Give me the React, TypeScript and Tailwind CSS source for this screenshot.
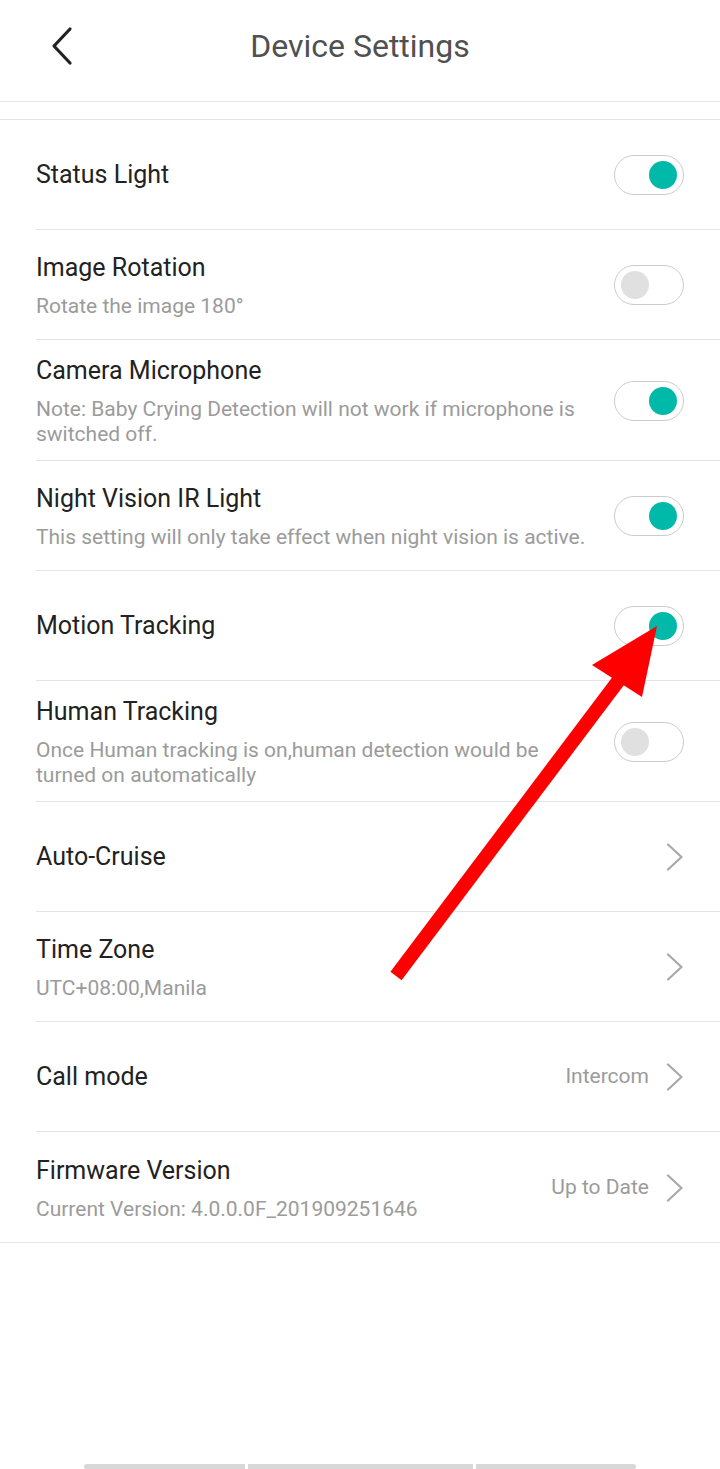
import React from 'react';

type Row = {
  title: string;
  sub?: string;
  toggle?: boolean;
  value?: string;
  chevron?: boolean;
};

const rows: Row[] = [
  { title: 'Status Light', toggle: true },
  { title: 'Image Rotation', sub: 'Rotate the image 180°', toggle: false },
  {
    title: 'Camera Microphone',
    sub: 'Note: Baby Crying Detection will not work if microphone is switched off.',
    toggle: true,
  },
  {
    title: 'Night Vision IR Light',
    sub: 'This setting will only take effect when night vision is active.',
    toggle: true,
  },
  { title: 'Motion Tracking', toggle: true },
  {
    title: 'Human Tracking',
    sub: 'Once Human tracking is on,human detection would be turned on automatically',
    toggle: false,
  },
  { title: 'Auto-Cruise', chevron: true },
  { title: 'Time Zone', sub: 'UTC+08:00,Manila', chevron: true },
  { title: 'Call mode', value: 'Intercom', chevron: true },
  {
    title: 'Firmware Version',
    sub: 'Current Version: 4.0.0.0F_201909251646',
    value: 'Up to Date',
    chevron: true,
  },
];

function Toggle({ on }: { on: boolean }) {
  return (
    <div
      className={`w-[70px] h-[40px] rounded-full border border-[#cccccc] bg-white flex items-center px-[6px] ${
        on ? 'justify-end' : 'justify-start'
      }`}
    >
      <div className={`w-[28px] h-[28px] rounded-full ${on ? 'bg-[#00b9a9]' : 'bg-[#e0e0e0]'}`} />
    </div>
  );
}

function Chevron() {
  return (
    <svg width="18" height="28" viewBox="0 0 18 28" fill="none">
      <path d="M2 1.5 L15.5 14 L2 26.5" stroke="#a8a8a8" strokeWidth="2.2" strokeLinecap="round" strokeLinejoin="round" />
    </svg>
  );
}

export default function App() {
  return (
    <div
      className="relative w-[720px] h-[1469px] bg-white flex flex-col overflow-hidden"
      style={{ fontFamily: 'Roboto, "Noto Sans", sans-serif' }}
    >
      {/* Header */}
      <div className="relative h-[102px] border-b border-[#e4e4e4] flex items-center justify-center">
        <button className="absolute left-[46px] top-[26px] w-[34px] h-[40px] flex items-center justify-center">
          <svg width="28" height="40" viewBox="0 0 28 40" fill="none">
            <path d="M21 3 L5 20 L21 37" stroke="#222222" strokeWidth="3.2" strokeLinecap="round" strokeLinejoin="round" />
          </svg>
        </button>
        <h1 className="text-[32px] leading-none text-[#505050] -mt-[10px]">Device Settings</h1>
      </div>

      <div className="h-[17px]" />

      {/* Settings list */}
      <div className="border-t border-b border-[#e4e4e4]">
        {rows.map((row, i) => (
          <div key={row.title} className="pl-[36px]">
            <div
              className={`min-h-[110px] pt-[14px] pb-[13px] pr-[36px] flex items-center ${
                i < rows.length - 1 ? 'border-b border-[#e4e4e4]' : ''
              }`}
            >
              <div className="flex-1 min-w-0 pr-[18px]">
                <div className="text-[25px] leading-[34px] text-[#222222]">{row.title}</div>
                {row.sub && (
                  <div className="mt-[9px] text-[21px] leading-[25px] text-[#9b9b9b]">{row.sub}</div>
                )}
              </div>
              {row.toggle !== undefined && <Toggle on={row.toggle} />}
              {row.chevron && (
                <div className="flex items-center gap-[17px]">
                  {row.value && <span className="text-[21px] text-[#9b9b9b]">{row.value}</span>}
                  <Chevron />
                </div>
              )}
            </div>
          </div>
        ))}
      </div>

      {/* Bottom nav indicator */}
      <div className="mt-auto flex justify-center gap-[3px]">
        <div className="w-[161px] h-[5px] rounded-l-full bg-[#d8d8d8]" />
        <div className="w-[225px] h-[5px] bg-[#d8d8d8]" />
        <div className="w-[160px] h-[5px] rounded-r-full bg-[#d8d8d8]" />
      </div>

      {/* Red annotation arrow */}
      <svg
        className="absolute left-0 top-0 pointer-events-none"
        width="720"
        height="1469"
        viewBox="0 0 720 1469"
      >
        <line x1="396" y1="976" x2="622" y2="676" stroke="#ff0000" strokeWidth="14" />
        <polygon points="657,626 592,665 642,697" fill="#ff0000" />
      </svg>
    </div>
  );
}
